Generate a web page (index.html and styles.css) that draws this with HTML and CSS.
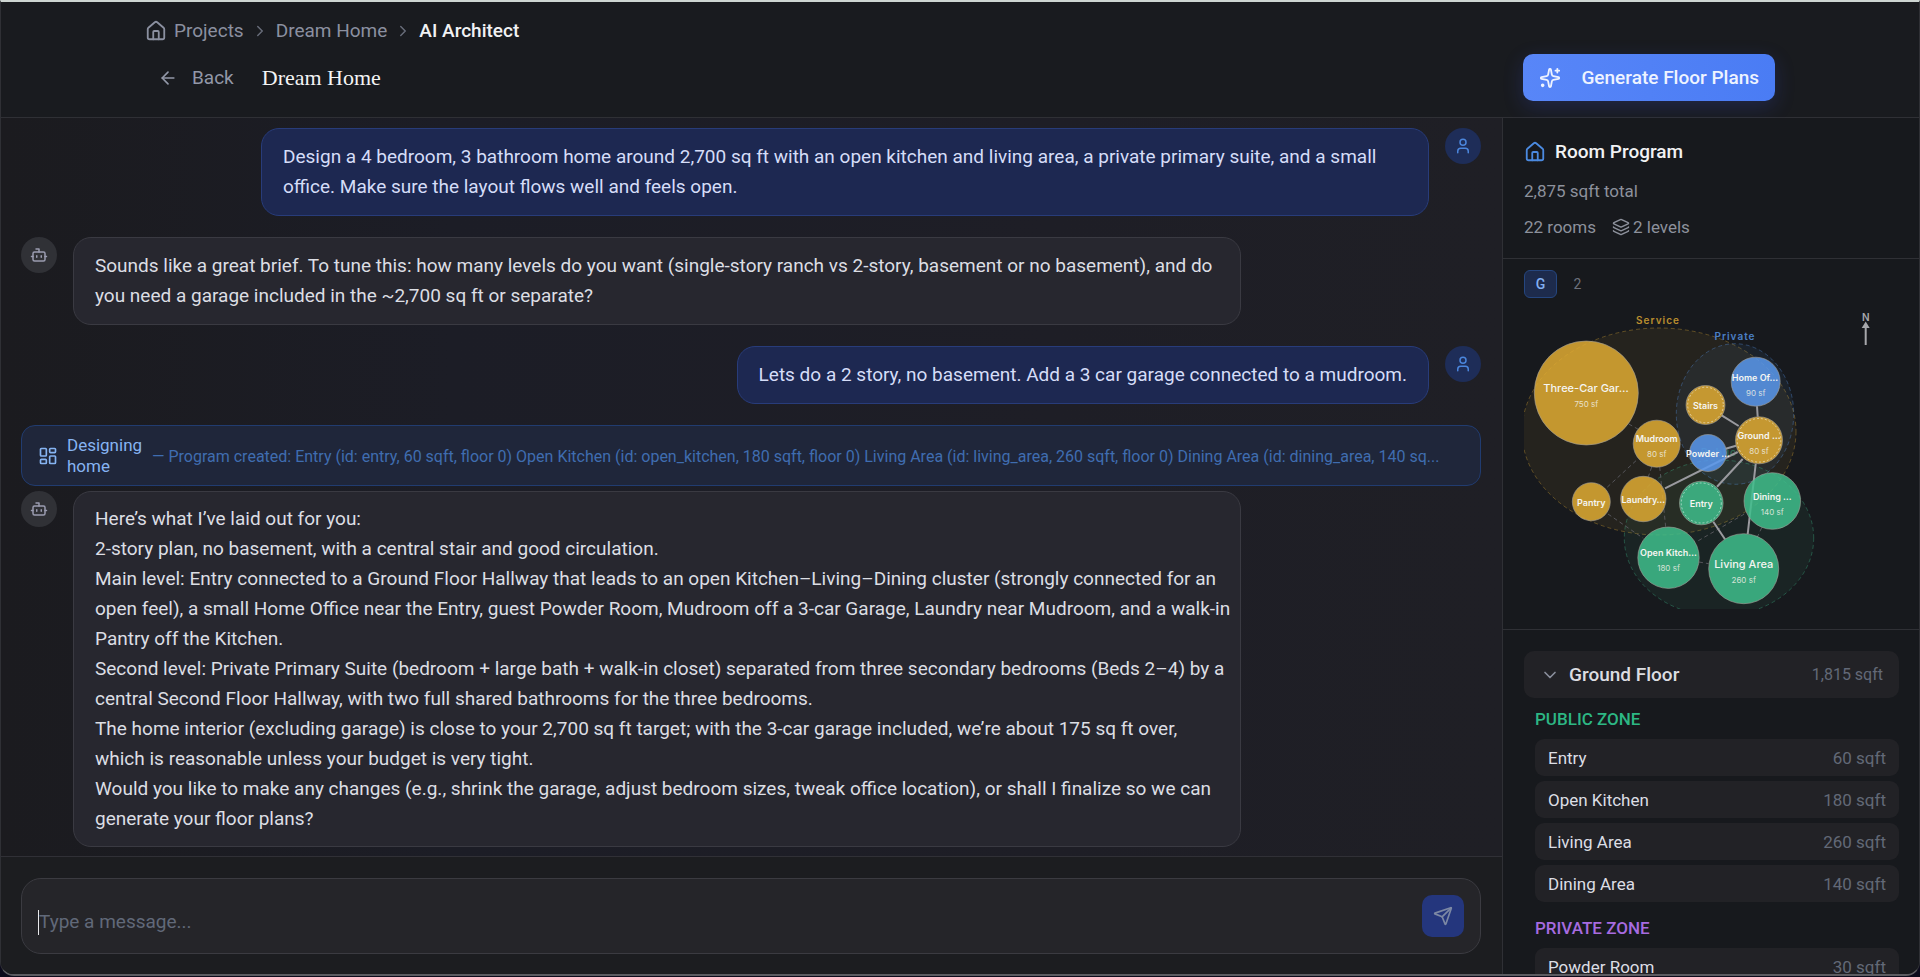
FILE: index.html
```html
<!DOCTYPE html>
<html lang="en">
<head>
<meta charset="utf-8">
<title>AI Architect – Dream Home</title>
<link rel="stylesheet" href="styles.css">
</head>
<body>
<svg class="sprite" aria-hidden="true">
  <symbol id="i-house" viewBox="0 0 24 24"><path d="M15 21v-8a1 1 0 0 0-1-1h-4a1 1 0 0 0-1 1v8"/><path d="M3 10a2 2 0 0 1 .709-1.528l7-5.999a2 2 0 0 1 2.582 0l7 5.999A2 2 0 0 1 21 10v9a2 2 0 0 1-2 2H5a2 2 0 0 1-2-2z"/></symbol>
  <symbol id="i-right" viewBox="0 0 24 24"><path d="m9 18 6-6-6-6"/></symbol>
  <symbol id="i-down" viewBox="0 0 24 24"><path d="m6 9 6 6 6-6"/></symbol>
  <symbol id="i-back" viewBox="0 0 24 24"><path d="m12 19-7-7 7-7"/><path d="M19 12H5"/></symbol>
  <symbol id="i-sparkles" viewBox="0 0 24 24"><path d="M11.017 2.814a1 1 0 0 1 1.966 0l1.051 5.558a2 2 0 0 0 1.594 1.594l5.558 1.051a1 1 0 0 1 0 1.966l-5.558 1.051a2 2 0 0 0-1.594 1.594l-1.051 5.558a1 1 0 0 1-1.966 0l-1.051-5.558a2 2 0 0 0-1.594-1.594l-5.558-1.051a1 1 0 0 1 0-1.966l5.558-1.051a2 2 0 0 0 1.594-1.594z"/><path d="M20 2v4"/><path d="M22 4h-4"/><circle cx="4" cy="20" r="1"/></symbol>
  <symbol id="i-user" viewBox="0 0 24 24"><path d="M19 21v-2a4 4 0 0 0-4-4H9a4 4 0 0 0-4 4v2"/><circle cx="12" cy="7" r="4"/></symbol>
  <symbol id="i-bot" viewBox="0 0 24 24"><path d="M12 8V4H8"/><rect width="16" height="12" x="4" y="8" rx="2"/><path d="M2 14h2"/><path d="M20 14h2"/><path d="M15 13v2"/><path d="M9 13v2"/></symbol>
  <symbol id="i-layers" viewBox="0 0 24 24"><path d="M12.83 2.18a2 2 0 0 0-1.66 0L2.6 6.08a1 1 0 0 0 0 1.83l8.58 3.91a2 2 0 0 0 1.66 0l8.58-3.9a1 1 0 0 0 0-1.83z"/><path d="M2 12a1 1 0 0 0 .58.91l8.6 3.91a2 2 0 0 0 1.65 0l8.58-3.9A1 1 0 0 0 22 12"/><path d="M2 17a1 1 0 0 0 .58.91l8.6 3.91a2 2 0 0 0 1.65 0l8.58-3.9A1 1 0 0 0 22 17"/></symbol>
  <symbol id="i-dash" viewBox="0 0 24 24"><rect width="7" height="9" x="3" y="3" rx="1"/><rect width="7" height="5" x="14" y="3" rx="1"/><rect width="7" height="9" x="14" y="12" rx="1"/><rect width="7" height="5" x="3" y="16" rx="1"/></symbol>
  <symbol id="i-send" viewBox="0 0 24 24"><path d="M14.536 21.686a.5.5 0 0 0 .937-.024l6.5-19a.496.496 0 0 0-.635-.635l-19 6.5a.5.5 0 0 0-.024.937l7.93 3.18a2 2 0 0 1 1.112 1.11z"/><path d="m21.854 2.147-10.94 10.939"/></symbol>
</svg>

<div class="app">
  <header class="header">
    <div class="header-inner">
      <nav class="crumbs" aria-label="Breadcrumb">
        <a class="crumb" href="#"><svg class="icon icon-22"><use href="#i-house"/></svg>Projects</a>
        <svg class="icon icon-18 crumb-sep"><use href="#i-right"/></svg>
        <a class="crumb" href="#">Dream Home</a>
        <svg class="icon icon-18 crumb-sep"><use href="#i-right"/></svg>
        <span class="crumb crumb-current">AI Architect</span>
      </nav>
      <div class="title-row">
        <a class="back" href="#"><svg class="icon icon-20"><use href="#i-back"/></svg>Back</a>
        <h1 class="title">Dream Home</h1>
        <button class="generate" type="button"><svg class="icon icon-22"><use href="#i-sparkles"/></svg>Generate Floor Plans</button>
      </div>
    </div>
  </header>

  <main class="chat">
    <div class="messages">
      <div class="message message-user">
        <div class="bubble">Design a 4 bedroom, 3 bathroom home around 2,700 sq ft with an open kitchen and living area, a private primary suite, and a small office. Make sure the layout flows well and feels open.</div>
        <div class="avatar"><svg class="icon icon-18"><use href="#i-user"/></svg></div>
      </div>
      <div class="message message-bot">
        <div class="avatar"><svg class="icon icon-18"><use href="#i-bot"/></svg></div>
        <div class="bubble">Sounds like a great brief. To tune this: how many levels do you want (single-story ranch vs 2-story, basement or no basement), and do you need a garage included in the ~2,700 sq ft or separate?</div>
      </div>
      <div class="message message-user">
        <div class="bubble">Lets do a 2 story, no basement. Add a 3 car garage connected to a mudroom.</div>
        <div class="avatar"><svg class="icon icon-18"><use href="#i-user"/></svg></div>
      </div>
      <div class="turn">
        <div class="status">
          <svg class="icon icon-20"><use href="#i-dash"/></svg>
          <span class="status-name">Designing home</span>
          <span class="status-detail">— Program created: Entry (id: entry, 60 sqft, floor 0) Open Kitchen (id: open_kitchen, 180 sqft, floor 0) Living Area (id: living_area, 260 sqft, floor 0) Dining Area (id: dining_area, 140 sq...</span>
        </div>
        <div class="message message-bot">
          <div class="avatar"><svg class="icon icon-18"><use href="#i-bot"/></svg></div>
          <div class="bubble bubble-long">
            <p>Here’s what I’ve laid out for you:</p>
            <p>2-story plan, no basement, with a central stair and good circulation.</p>
            <p>Main level: Entry connected to a Ground Floor Hallway that leads to an open Kitchen–Living–Dining cluster (strongly connected for an open feel), a small Home Office near the Entry, guest Powder Room, Mudroom off a 3-car Garage, Laundry near Mudroom, and a walk-in Pantry off the Kitchen.</p>
            <p>Second level: Private Primary Suite (bedroom + large bath + walk-in closet) separated from three secondary bedrooms (Beds 2–4) by a central Second Floor Hallway, with two full shared bathrooms for the three bedrooms.</p>
            <p>The home interior (excluding garage) is close to your 2,700 sq ft target; with the 3-car garage included, we’re about 175 sq ft over,<br>which is reasonable unless your budget is very tight.</p>
            <p>Would you like to make any changes (e.g., shrink the garage, adjust bedroom sizes, tweak office location), or shall I finalize so we can generate your floor plans?</p>
          </div>
        </div>
      </div>
    </div>
    <form class="composer">
      <div class="composer-box">
        <textarea class="composer-input" rows="1" placeholder="Type a message..." aria-label="Message"></textarea>
        <button class="send" type="button" aria-label="Send"><svg class="icon icon-20"><use href="#i-send"/></svg></button>
      </div>
    </form>
  </main>

  <aside class="program">
    <section class="summary">
      <h2 class="summary-title"><svg class="icon icon-22"><use href="#i-house"/></svg>Room Program</h2>
      <p class="summary-line">2,875 sqft total</p>
      <p class="summary-line"><span>22 rooms</span><span class="levels"><svg class="icon icon-18"><use href="#i-layers"/></svg>2 levels</span></p>
    </section>

    <section class="diagram">
      <div class="tabs">
        <button class="tab tab-active" type="button">G</button>
        <button class="tab" type="button">2</button>
      </div>
      <svg class="bubbles" viewBox="0 0 375 307" role="img" aria-label="Ground floor bubble diagram">
        <g class="zone">
          <ellipse class="service" cx="135" cy="129.5" rx="137" ry="103.5"/>
          <ellipse class="private" cx="211" cy="112" rx="58.7" ry="70.3"/>
          <ellipse class="public" cx="195" cy="236" rx="94.7" ry="78"/>
        </g>
        <g class="zone-label">
          <text class="service" x="134" y="22">Service</text>
          <text class="private" x="211" y="38">Private</text>
          <text class="public" x="195" y="154">Public</text>
        </g>
        <g class="link-soft">
          <path d="M104.7 122 114.3 127.3M112 158.7 82 186.3M127.7 165 124.3 174.7M135.7 165 141.7 225.3M84 212 119.3 236.3M175 260 184.7 261.7M174.3 238.7 222.7 210.7M237.7 225.7 232.7 236.3"/>
        </g>
        <g class="link">
          <path d="M197.7 113.3 214.7 124M233 104.3 233.7 114.7M201.7 146.7 212 143.7M141 186.3 213.7 150M193 184.7 218.7 157M231.7 162 223.7 232M189.3 219.7 201 237.3"/>
        </g>
        <g class="room">
          <circle class="service" cx="62.3" cy="91" r="52"/>
          <circle class="service" cx="132.7" cy="141.7" r="23.5"/>
          <circle class="private" cx="231.7" cy="79.7" r="24.5"/>
          <circle class="service" cx="181.5" cy="103" r="19.5"/>
          <circle class="service" cx="235" cy="138.3" r="23.5"/>
          <circle class="private" cx="184" cy="151" r="18.5"/>
          <circle class="public" cx="177.3" cy="201" r="21.8"/>
          <circle class="public" cx="248.3" cy="199" r="28.3"/>
          <circle class="service" cx="67.3" cy="199.7" r="19"/>
          <circle class="service" cx="119.3" cy="197" r="22.7"/>
          <circle class="public" cx="144.5" cy="255.7" r="30.7"/>
          <circle class="public" cx="219.7" cy="266.7" r="35"/>
        </g>
        <g class="ring">
          <circle cx="181.5" cy="103" r="17.8"/>
          <circle cx="235" cy="138.3" r="21.8"/>
          <circle cx="177.3" cy="201" r="20"/>
        </g>
        <g class="room-name">
          <text class="large" x="62" y="90">Three-Car Gar…</text>
          <text x="132.7" y="140">Mudroom</text>
          <text x="231" y="79">Home Of…</text>
          <text x="181.5" y="107">Stairs</text>
          <text x="235" y="137">Ground …</text>
          <text x="184" y="155">Powder …</text>
          <text x="177.3" y="205">Entry</text>
          <text x="248.3" y="198">Dining …</text>
          <text x="67.3" y="204">Pantry</text>
          <text x="119.3" y="201">Laundry…</text>
          <text x="144.5" y="254">Open Kitch…</text>
          <text class="large" x="219.7" y="266">Living Area</text>
        </g>
        <g class="room-area">
          <text x="62.3" y="105">750 sf</text>
          <text x="132.7" y="155">80 sf</text>
          <text x="231.7" y="94">90 sf</text>
          <text x="235" y="152">80 sf</text>
          <text x="248.3" y="213">140 sf</text>
          <text x="144.5" y="269">180 sf</text>
          <text x="219.7" y="281">260 sf</text>
        </g>
        <g class="north">
          <text x="341.7" y="19">N</text>
          <path d="M341.7 24V43"/>
          <path class="north-tip" d="M341.7 19.5 345.7 26H337.7Z"/>
        </g>
      </svg>
    </section>

    <section class="floor">
      <button class="floor-head" type="button"><svg class="icon icon-20"><use href="#i-down"/></svg><span class="floor-name">Ground Floor</span><span class="area floor-area">1,815 sqft</span></button>
      <div class="rooms">
        <h3 class="rooms-title rooms-public">PUBLIC ZONE</h3>
        <ul class="room-list">
          <li class="room-row"><span>Entry</span><span class="area">60 sqft</span></li>
          <li class="room-row"><span>Open Kitchen</span><span class="area">180 sqft</span></li>
          <li class="room-row"><span>Living Area</span><span class="area">260 sqft</span></li>
          <li class="room-row"><span>Dining Area</span><span class="area">140 sqft</span></li>
        </ul>
        <h3 class="rooms-title rooms-private">PRIVATE ZONE</h3>
        <ul class="room-list">
          <li class="room-row"><span>Powder Room</span><span class="area">30 sqft</span></li>
        </ul>
      </div>
    </section>
  </aside>
</div>
</body>
</html>
```
FILE: styles.css
```css
* { box-sizing: border-box; }

body {
  margin: 0;
  height: 100vh;
  padding-bottom: 1px;
  overflow: hidden;
  background: #0c0b1c;
  color: #dcdee4;
  font: 19px/30px Roboto, Inter, sans-serif;
}

h1, h2, h3, p, ul { margin: 0; padding: 0; font-weight: 400; }
a { color: inherit; text-decoration: none; }
button { border: 0; padding: 0; background: none; color: inherit; font: inherit; }

.sprite { position: absolute; width: 0; height: 0; }
.icon { flex: none; fill: none; stroke: currentColor; stroke-width: 2; stroke-linecap: round; stroke-linejoin: round; }
.icon-18 { width: 18px; height: 18px; }
.icon-20 { width: 20px; height: 20px; }
.icon-22 { width: 22px; height: 22px; }

.app {
  display: grid;
  grid-template: auto minmax(0, 1fr) / minmax(0, 1fr) 417px;
  height: 100%;
  overflow: hidden;
  border: 1px solid #2f3035;
  border-top: 2px solid #cdd5d2;
  border-bottom: 2px solid #5c5c61;
  border-radius: 0 0 14px 14px;
  background: #191b1f;
}

/* Header */
.header { grid-column: 1 / -1; border-bottom: 1px solid #2f3035; }
.header-inner { max-width: 1630px; margin: 0 auto; padding: 14px 0 16px; }
.crumbs { display: flex; align-items: center; gap: 7px; color: #8b90a0; }
.crumb { display: flex; align-items: center; gap: 7px; }
.crumb-sep { color: #666b78; }
.crumb-current { color: #f1f2f4; font-weight: 500; }
.title-row { display: flex; align-items: center; margin-top: 8px; }
.back { display: flex; align-items: center; gap: 14px; margin-left: 13px; color: #9298a8; }
.title { margin-left: 28px; color: #f4f4f5; font: 22px/30px "Liberation Serif", serif; }
.generate {
  display: flex; align-items: center; gap: 20px;
  height: 47px; margin-left: auto; padding: 0 16px;
  border-radius: 10px;
  background: linear-gradient(90deg, #5886f8, #4a7cf4);
  box-shadow: 0 6px 20px rgba(59, 80, 220, .22);
  color: #eef3ff; font-weight: 500;
}

/* Chat */
.chat { display: flex; flex-direction: column; min-height: 0; background: linear-gradient(90deg, #1b1b1f, #1c1d26 30%, #1e1e26 70%, #1f1f25); }
.messages { flex: 1; min-height: 0; display: flex; flex-direction: column; gap: 21px; padding: 10px 21px 0 20px; overflow: hidden; }
.message { display: flex; align-items: flex-start; gap: 16px; }
.message-user { justify-content: flex-end; }
.bubble { max-width: 80%; padding: 13px 21px; border: 1px solid #3a3a42; border-radius: 18px; background: #27272f; }
.bubble-long { padding: 12px 6px 12px 21px; }
.message-user .bubble { border-color: #283c7a; background: #1d2851; color: #d5ddf8; }
.avatar { display: grid; place-items: center; flex: none; width: 36px; height: 36px; border-radius: 50%; background: #303136; color: #9a9cb0; }
.message-user .avatar { background: #1e2d58; color: #4b86dc; }
.turn { display: flex; flex-direction: column; gap: 5px; }
.status { display: flex; align-items: center; gap: 9px; padding: 9px 16px 8px; border: 1px solid #213c70; border-radius: 14px; background: #1f263a; color: #86b4f2; font-size: 17px; line-height: 21px; }
.status-name { flex: none; width: 76px; }
.status-detail { flex: 1; min-width: 0; overflow: hidden; color: #3f6db0; font-size: 16px; white-space: nowrap; text-overflow: ellipsis; }

/* Composer */
.composer { padding: 21px 21px 20px 20px; border-top: 1px solid #303036; background: #1c1d20; }
.composer-box { display: flex; align-items: center; padding: 16px; border: 1px solid #3b3b41; border-radius: 20px; background: #252529; }
.composer-box::before { content: ""; width: 1px; height: 25px; margin-top: 12px; background: #e8e8ea; }
.composer-input { flex: 1; height: 42px; padding: 12px 0 0; border: 0; outline: 0; resize: none; overflow: hidden; background: none; color: #e4e5e9; font: inherit; }
.composer-input::placeholder { color: #616979; opacity: 1; }
.send { display: grid; place-items: center; width: 42px; height: 42px; border-radius: 10px; background: #24367d; color: #7c88a4; }

/* Room program */
.program { min-height: 0; overflow: hidden; border-left: 1px solid #2f3035; background: #17191d; }
.summary { display: grid; gap: 6px; padding: 19px 21px 16px; border-bottom: 1px solid #2f3035; color: #8d919c; font-size: 17px; }
.summary-title { display: flex; align-items: center; gap: 9px; margin-bottom: 3px; color: #f1f2f4; font-size: 19px; font-weight: 500; }
.summary-title .icon { color: #4b8ae0; }
.summary-line { display: flex; gap: 16px; }
.levels { display: flex; align-items: center; gap: 3px; }

.diagram { padding: 11px 20px 20px 21px; border-bottom: 1px solid #2f3035; }
.tabs { display: flex; gap: 4px; margin-bottom: 4px; }
.tab { width: 33px; height: 28px; border: 1px solid transparent; border-radius: 6px; color: #6c707b; font-size: 14px; line-height: 20px; }
.tab-active { border-color: #25467f; background: #1d2b4c; color: #82b0f3; font-weight: 500; }

.bubbles { display: block; width: 100%; font-family: Inter, sans-serif; text-anchor: middle; }
.service { --hue: #e0ac33; }
.private { --hue: #5999ee; }
.public { --hue: #40be8c; }
.zone ellipse { fill: var(--hue); fill-opacity: .07; stroke: var(--hue); stroke-opacity: .35; stroke-dasharray: 4 3; }
.zone-label text { fill: var(--hue); opacity: .8; font-size: 10px; font-weight: 600; letter-spacing: 1px; }
.zone-label .public { opacity: .4; }
.link { fill: none; stroke: #9a9a9f; stroke-width: 2; }
.link-soft { fill: none; stroke: #55555a; stroke-dasharray: 4 3; }
.room circle { fill: var(--hue); fill-opacity: .85; stroke: #a3a09a; stroke-opacity: .6; }
.ring { fill: none; stroke: #fff; stroke-opacity: .5; stroke-dasharray: 2 2; }
.room-name text { fill: #f5f5f2; font-size: 9px; font-weight: 600; }
.room-name .large { font-size: 11px; font-weight: 500; }
.room-area text { fill: #f0efe6; fill-opacity: .85; font-size: 8px; }
.north { fill: #a6a7ab; stroke: #a6a7ab; stroke-width: 2; }
.north text { stroke: none; font-size: 10px; font-weight: 600; }
.north-tip { stroke: none; }

.floor { padding: 21px 20px 0 21px; }
.floor-head { display: flex; align-items: center; gap: 9px; width: 100%; height: 47px; padding: 0 16px; border-radius: 10px; background: #222226; color: #dcdde1; text-align: left; }
.floor-name { font-weight: 500; }
.floor-head .icon { color: #8a8f9c; }
.area { margin-left: auto; color: #626977; font-size: 17px; }
.floor-area { font-size: 16px; }
.rooms { padding-left: 11px; }
.rooms-title { margin-top: 6px; font-size: 17px; font-weight: 500; }
.rooms-public { color: #2db784; }
.rooms-private { margin-top: 11px; color: #a76be0; }
.room-list { display: grid; gap: 5px; margin-top: 5px; list-style: none; }
.room-row { display: flex; align-items: center; height: 37px; padding: 0 13px; border-radius: 9px; background: #222226; font-size: 17px; }
```
